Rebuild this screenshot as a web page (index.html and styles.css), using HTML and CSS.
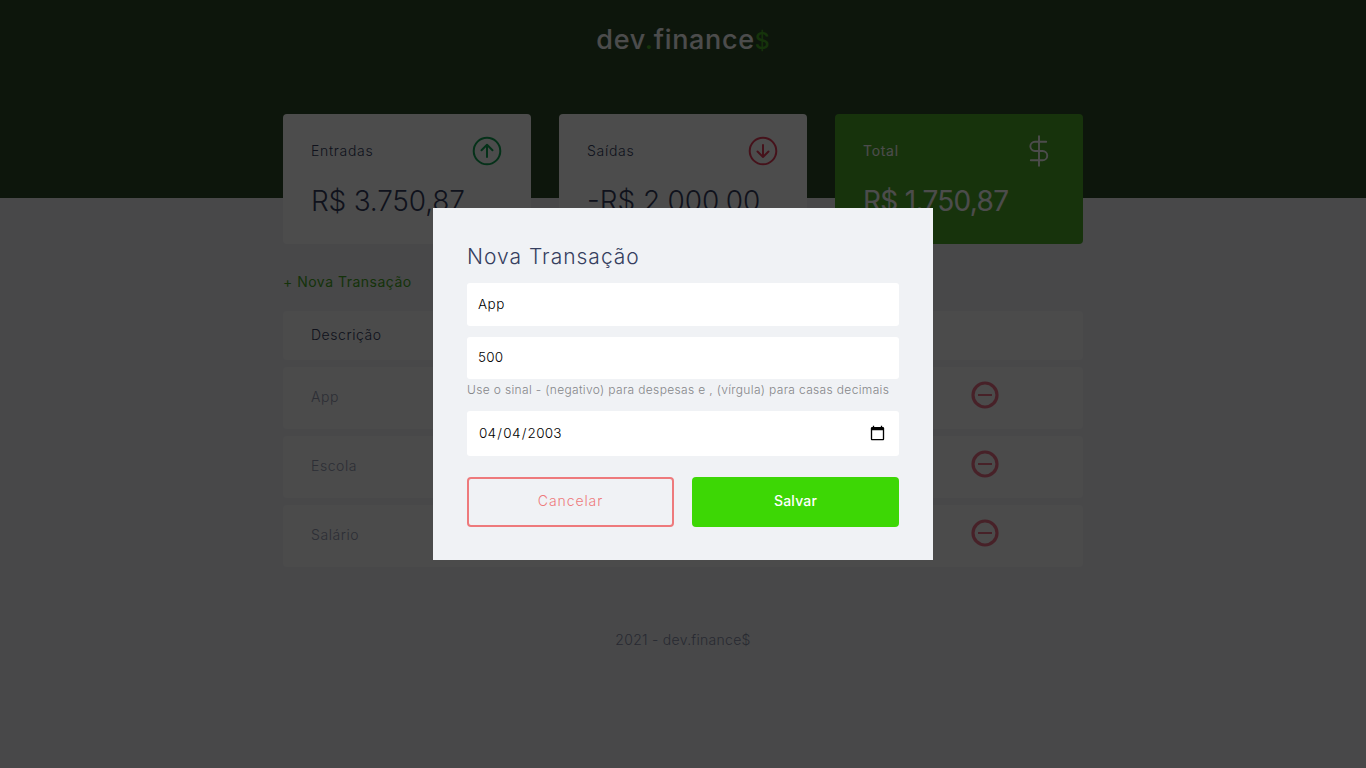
FILE: index.html
```html
<!DOCTYPE html>
<html lang="pt-br">
<head>
<meta charset="utf-8">
<title>dev.finance$</title>
<link rel="stylesheet" href="styles.css">
</head>
<body>
<header class="header">
  <h1 class="logo">dev<span class="logo-dot">.</span>finance<span class="logo-sign">$</span></h1>
</header>
<main class="container">
  <section class="balance">
    <div class="card">
      <h3 class="card-head"><span>Entradas</span>
        <svg width="32" height="32" viewBox="0 0 32 32" fill="none" stroke="#12a454" stroke-width="2" stroke-linecap="round" stroke-linejoin="round"><circle cx="16" cy="16" r="13.3"/><path d="M16 22V10M10.5 15.3L16 9.8l5.5 5.5"/></svg>
      </h3>
      <p class="amount a-in">R$ 3.750,87</p>
    </div>
    <div class="card">
      <h3 class="card-head"><span>Saídas</span>
        <svg width="32" height="32" viewBox="0 0 32 32" fill="none" stroke="#e83f5b" stroke-width="2" stroke-linecap="round" stroke-linejoin="round"><circle cx="16" cy="16" r="13.3"/><path d="M16 10v12M10.5 16.5L16 22l5.5-5.5"/></svg>
      </h3>
      <p class="amount a-out">-R$ 2.000,00</p>
    </div>
    <div class="card card-total">
      <h3 class="card-head"><span>Total</span>
        <svg width="32" height="32" viewBox="0 0 32 32" fill="none" stroke="#fff" stroke-width="1.9" stroke-linecap="round"><path d="M16 1.2v29.6M23.2 6.7H12a4.65 4.65 0 0 0 0 9.3h7.6a4.65 4.65 0 0 1 0 9.3H7.8"/></svg>
      </h3>
      <p class="amount a-total">R$ 1.750,87</p>
    </div>
  </section>
  <section class="transactions">
    <a class="new">+ Nova Transação</a>
    <div class="table">
      <div class="row row-head"><span>Descrição</span></div>
      <div class="row"><span>App</span>
        <svg width="28" height="28" viewBox="0 0 28 28" fill="none" stroke="#e92949"><circle cx="14" cy="14" r="12" stroke-width="3.2"/><path d="M7 14h14" stroke-width="2"/></svg></div>
      <div class="row"><span>Escola</span>
        <svg width="28" height="28" viewBox="0 0 28 28" fill="none" stroke="#e92949"><circle cx="14" cy="14" r="12" stroke-width="3.2"/><path d="M7 14h14" stroke-width="2"/></svg></div>
      <div class="row"><span>Salário</span>
        <svg width="28" height="28" viewBox="0 0 28 28" fill="none" stroke="#e92949"><circle cx="14" cy="14" r="12" stroke-width="3.2"/><path d="M7 14h14" stroke-width="2"/></svg></div>
    </div>
  </section>
</main>
<footer class="footer"><p>2021 - dev.finance$</p></footer>
<div class="overlay">
  <form class="modal">
    <h2 class="modal-title">Nova Transação</h2>
    <input class="field f-desc" type="text" value="App">
    <input class="field f-amount" type="text" value="500">
    <small class="help">Use o sinal - (negativo) para despesas e , (vírgula) para casas decimais</small>
    <input class="field f-date" type="date" value="2003-04-04">
    <div class="actions">
      <a class="button cancel">Cancelar</a>
      <button class="button save" type="button">Salvar</button>
    </div>
  </form>
</div>
</body>
</html>
```
FILE: styles.css
```css
* { margin: 0; padding: 0; box-sizing: border-box; }
body { background: #f0f2f5; height: 768px; overflow: hidden; font: 300 14px/20px Inter, "Open Sans", sans-serif; color: #363f5f; }
.header { height: 198px; background: #2d4a28; padding-top: 20px; text-align: center; }
.logo { font-size: 27px; line-height: 40px; font-weight: 500; color: #fff; letter-spacing: .68px; }
.logo-dot { color: #49aa26; }
.logo-sign { color: #49aa26; font-size: 23px; letter-spacing: 0; }
.container { width: 800px; margin: 0 auto; }
.balance { display: grid; grid-template-columns: repeat(3, 1fr); gap: 28px; margin-top: -84px; }
.card { height: 130px; padding: 21px 28px; background: #fff; border-radius: 4px; white-space: nowrap; }
.card-head { display: flex; justify-content: space-between; align-items: center; font-size: 14px; font-weight: 300; letter-spacing: .7px; }
.amount { font-size: 28px; line-height: 42px; margin-top: 13px; }
.a-in { letter-spacing: -.2px; }
.a-total { letter-spacing: -.7px; }
.card-total { background: #4faa29; color: #fff; }
.card-total .card-head, .card-total .amount { font-weight: 400; }
.transactions { padding-top: 28px; }
.new { display: block; color: #49aa26; font-weight: 400; letter-spacing: .5px; }
.table { display: grid; gap: 7px; margin-top: 19px; }
.row { display: flex; justify-content: space-between; align-items: center; height: 62px; padding: 0 84px 7px 28px; background: #fafafb; border-radius: 4px; color: #969cb3; letter-spacing: .55px; }
.row span { padding-top: 4px; }
.row svg { opacity: .65; }
.row-head { height: 49px; color: #363f5f; padding-bottom: 6px; }
.footer { margin-top: 63px; text-align: center; color: #878da6; letter-spacing: .28px; }
.overlay { position: absolute; inset: 0; background: rgba(0, 0, 0, .7); display: flex; justify-content: center; align-items: center; }
.modal { width: 500px; height: 352px; padding: 33px 34px; background: #f0f2f5; display: flex; flex-direction: column; }
.modal-title { font-size: 21px; line-height: 32px; font-weight: 300; letter-spacing: 1px; }
.field { width: 100%; border: 0; border-radius: 3px; background: #fff; padding: 0 11px 2px; font: 300 13.5px Inter, sans-serif; color: #000; }
.f-desc { height: 43px; margin-top: 10px; letter-spacing: .5px; }
.f-amount { height: 42px; margin-top: 11px; letter-spacing: .2px; }
.help { font-size: 12px; line-height: 16px; margin-top: 3px; color: #858689; white-space: nowrap; letter-spacing: .34px; }
.f-date { height: 45px; margin-top: 13px; letter-spacing: .25px; }
.f-date::-webkit-calendar-picker-indicator { width: 17px; height: 17px; padding: 2px 2px 0; }
.actions { display: grid; grid-template-columns: 1fr 1fr; gap: 18px; margin-top: 21px; }
.button { height: 50px; padding-bottom: 3px; border-radius: 4px; display: flex; align-items: center; justify-content: center; font: 300 14px Inter, sans-serif; }
.cancel { border: 2px solid #ee7a7c; color: #ee7a7c; letter-spacing: .9px; }
.save { border: 0; background: #3dd705; color: #fff; font-weight: 500; letter-spacing: .2px; }
```
